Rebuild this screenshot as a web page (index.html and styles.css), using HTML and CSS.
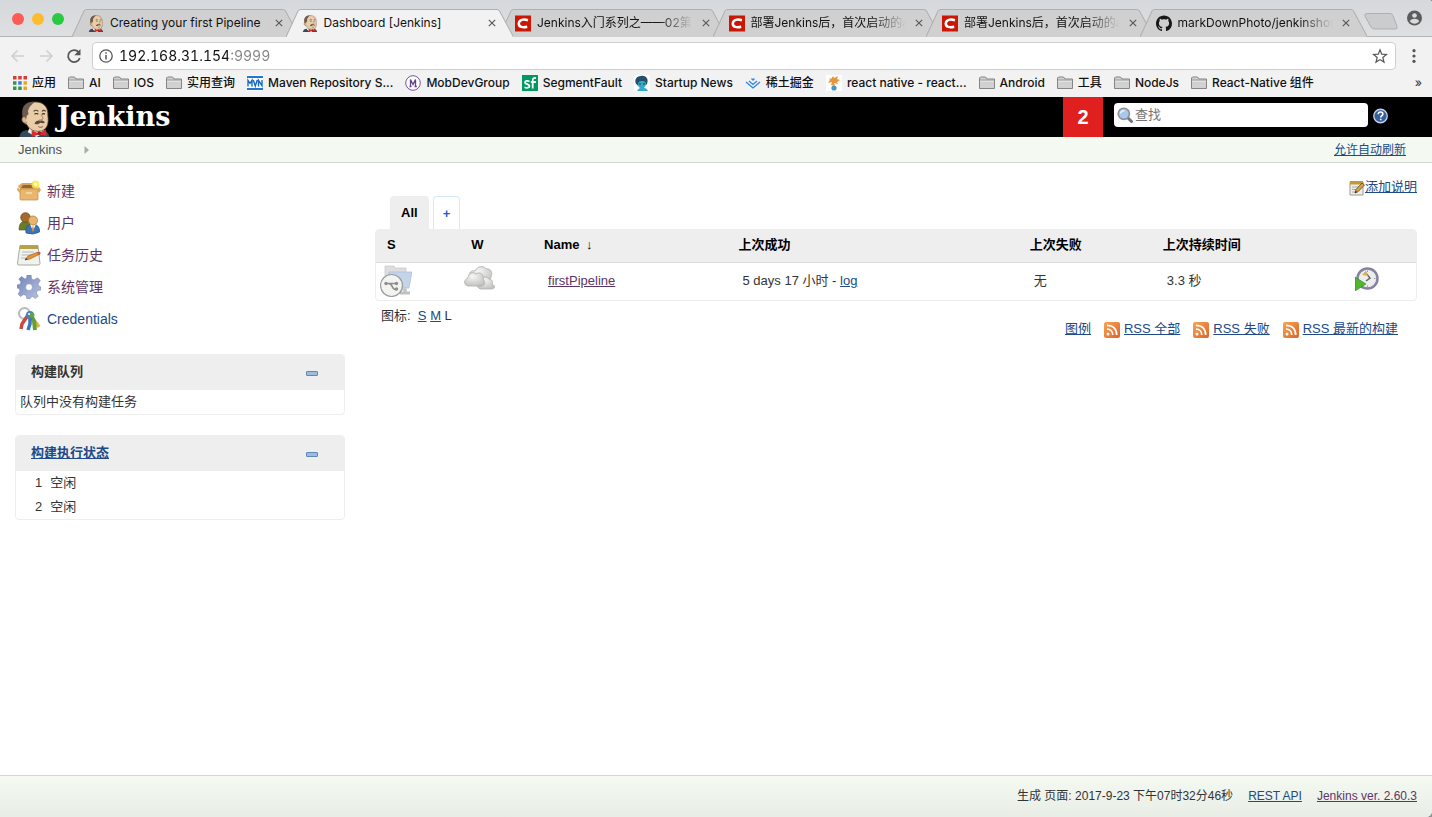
FILE: index.html
```html
<!DOCTYPE html>
<html lang="zh-CN">
<head>
<meta charset="utf-8">
<title>Dashboard [Jenkins]</title>
<link rel="stylesheet" href="styles.css">
</head>
<body>
<svg class="defs" aria-hidden="true">
  <defs>
    <linearGradient id="orange" x1="0" y1="0" x2="1" y2="1"><stop offset="0" stop-color="#f6a457"/><stop offset="1" stop-color="#de6425"/></linearGradient>
    <radialGradient id="cloudFill" cx=".4" cy=".3" r=".8"><stop offset="0" stop-color="#f6f6f5"/><stop offset="1" stop-color="#bdbdbb"/></radialGradient>
    <linearGradient id="gearFill" x1="0" y1="0" x2="1" y2="1"><stop offset="0" stop-color="#6f83b8"/><stop offset="1" stop-color="#b9c4e2"/></linearGradient>
    <symbol id="butler" viewBox="0 0 34 38">
      <path d="M1 38c1-5 4-7 9-7l16 0c4 1 6 3 7 7z" fill="#33495c"/>
      <path d="M12 27l-2 6 9 5 9-5-3-5z" fill="#f3eee6"/>
      <path d="M6 14C5 6 11 1 18 1c8 0 13 5 13 12 0 4 1 7 0 11-1 5-5 8-10 8-6 0-10-3-12-7-3-1-4-3-4-6 0-2 0-4 1-5z" fill="#e9cda9" stroke="#5b493c" stroke-width=".8"/>
      <path d="M17 1C9 0 4 5 4 12c0 3 0 6 2 9l2-1 1-5c2 0 2-2 1-4 1-4 3-6 5-8z" fill="#6b5a4d"/>
      <path d="M7 17c-2-1-4 1-3 4 1 2 3 3 5 2" fill="#dfb58d" stroke="#765840" stroke-width=".8"/>
      <path d="M16 11c2-2 4-1 5 0M25 11c1-2 3-1 4 0" fill="none" stroke="#534237" stroke-width="1.2"/>
      <path d="M17 14c1-1 3-1 4 0M25 14c1-1 2-1 3 0" fill="none" stroke="#332c28" stroke-width="1.2"/>
      <path d="M24 14c1 3 3 4 1 6h-3" fill="none" stroke="#a67650" stroke-width="1"/>
      <path d="M17 24c1-3 4-4 6-3 2-1 4 0 5 2-2 1-4 0-5 0-2 2-4 2-6 1z" fill="#574b43"/>
      <path d="M21 27c2 1 3 1 5 0" fill="none" stroke="#8b4f3d"/>
      <path d="M14 31l7 3 8-4 1 7-8-2-8 3z" fill="#d82c2c"/><circle cx="22" cy="34" r="2" fill="#9d171d"/>
    </symbol>
    <symbol id="folder" viewBox="0 0 16 13"><path d="M.5 12V1.5l1-1h5l1.500 2h7.500V12z" fill="#d1d1d1" stroke="#858585"/><path d="M1 4h14v1H1z" fill="#f3f3f3"/><path d="M1 3.500h14" stroke="#999"/></symbol>
    <symbol id="csdn" viewBox="0 0 16 16"><path fill="#ca1705" d="M0 0h16v16H0z"/><path d="M13 4.800c-4.500-1.400-9-.7-9.200 3.200-.2 3.600 4 4.300 8.400 3.200" fill="none" stroke="#fff" stroke-width="2.500"/></symbol>
    <symbol id="cross" viewBox="0 0 8 8"><path d="M.8.8l6.400 6.400M7.200.8L.8 7.200" stroke="#5a5a5a" stroke-width="1.200"/></symbol>
    <symbol id="rss" viewBox="0 0 16 16"><rect width="16" height="16" rx="2" fill="url(#orange)"/><circle cx="4" cy="12" r="1.500" fill="#fff"/><path d="M3 7.200c3.500 0 5.800 2.300 5.800 5.800M3 3.300c6 0 9.700 3.700 9.700 9.700" fill="none" stroke="#fff" stroke-width="1.700"/></symbol>
    <symbol id="tabshape" viewBox="0 0 228 28" preserveAspectRatio="none"><path d="M0 28L12 2Q13 .5 15 .5H211Q213 .5 214 2L228 28z" fill="currentColor"/><path d="M0 28L12 2Q13 .5 15 .5H211Q213 .5 214 2L228 28" fill="none" stroke="#aeafb0" vector-effect="non-scaling-stroke"/></symbol>
  </defs>
</svg>

<div class="browser">
  <div class="tabstrip">
    <div class="lights"><button class="light red" aria-label="Close"></button><button class="light yellow" aria-label="Minimize"></button><button class="light green" aria-label="Zoom"></button></div>
    <div class="tabs">
      <div class="tab"><svg class="shape"><use href="#tabshape"/></svg><svg class="fav"><use href="#butler"/></svg><span class="title">Creating your first Pipeline</span><button class="close" aria-label="Close tab"><svg><use href="#cross"/></svg></button></div>
      <div class="tab active"><svg class="shape"><use href="#tabshape"/></svg><svg class="fav"><use href="#butler"/></svg><span class="title">Dashboard [Jenkins]</span><button class="close" aria-label="Close tab"><svg><use href="#cross"/></svg></button></div>
      <div class="tab"><svg class="shape"><use href="#tabshape"/></svg><svg class="fav"><use href="#csdn"/></svg><span class="title fade">Jenkins入门系列之——02第二</span><button class="close" aria-label="Close tab"><svg><use href="#cross"/></svg></button></div>
      <div class="tab"><svg class="shape"><use href="#tabshape"/></svg><svg class="fav"><use href="#csdn"/></svg><span class="title fade">部署Jenkins后，首次启动的ad</span><button class="close" aria-label="Close tab"><svg><use href="#cross"/></svg></button></div>
      <div class="tab"><svg class="shape"><use href="#tabshape"/></svg><svg class="fav"><use href="#csdn"/></svg><span class="title fade">部署Jenkins后，首次启动的ad</span><button class="close" aria-label="Close tab"><svg><use href="#cross"/></svg></button></div>
      <div class="tab"><svg class="shape"><use href="#tabshape"/></svg><svg class="fav" viewBox="0 0 16 16"><path fill="#191717" d="M8 0C3.58 0 0 3.58 0 8c0 3.54 2.29 6.53 5.47 7.59.4.07.55-.17.55-.38 0-.19-.01-.82-.01-1.49-2.01.37-2.53-.49-2.69-.94-.09-.23-.48-.94-.82-1.13-.28-.15-.68-.52-.01-.53.63-.01 1.08.58 1.23.82.72 1.21 1.87.87 2.33.66.07-.52.28-.87.51-1.07-1.78-.2-3.64-.89-3.64-3.95 0-.87.31-1.59.82-2.15-.08-.2-.36-1.02.08-2.12 0 0 .67-.21 2.2.82.64-.18 1.32-.27 2-.27s1.36.09 2 .27c1.53-1.04 2.2-.82 2.2-.82.44 1.1.16 1.92.08 2.12.51.56.82 1.27.82 2.15 0 3.07-1.87 3.75-3.65 3.95.29.25.54.73.54 1.48 0 1.07-.01 1.93-.01 2.2 0 .21.15.46.55.38A8 8 0 0 0 16 8c0-4.42-3.58-8-8-8z"/></svg><span class="title fade">markDownPhoto/jenkinshom</span><button class="close" aria-label="Close tab"><svg><use href="#cross"/></svg></button></div>
    </div>
    <button class="newtab" aria-label="New tab"><svg viewBox="0 0 34 17"><path d="M3 .5h23q2 0 3 2l4 11q1 2.500-2 2.500H10q-2 0-3-2L1 3Q0 .5 3 .5z" fill="#cbcccd" stroke="#aeafb0"/></svg></button>
    <button class="avatar" aria-label="Profile"><svg viewBox="0 0 16 16"><circle cx="8" cy="8" r="8" fill="#5a5c5e"/><circle cx="8" cy="5.300" r="2.500" fill="#d8dadb"/><path d="M3 11.500c1-2 3-2.700 5-2.700s4 .7 5 2.700c-1.200 1.800-3 2.600-5 2.600s-3.800-.8-5-2.600z" fill="#d8dadb"/></svg></button>
  </div>
  <div class="toolbar">
    <button aria-label="Back"><svg viewBox="0 0 16 16"><path d="M14 8H2M7.500 2.500L2 8l5.500 5.500" fill="none" stroke="#cfcfcf" stroke-width="1.500"/></svg></button>
    <button aria-label="Forward"><svg viewBox="0 0 16 16"><path d="M2 8h12M8.500 2.500L14 8l-5.500 5.500" fill="none" stroke="#cfcfcf" stroke-width="1.500"/></svg></button>
    <button aria-label="Reload"><svg viewBox="0 0 16 16"><path d="M12.700 4.200A6 6 0 1 0 13.800 10" fill="none" stroke="#565656" stroke-width="1.800"/><path d="M14.500 1v6.200H8.300z" fill="#565656"/></svg></button>
    <label class="omnibox">
      <svg viewBox="0 0 14 14"><circle cx="7" cy="7" r="6.200" fill="none" stroke="#555" stroke-width="1.300"/><path d="M7 6v4.500M7 3.300v1.500" stroke="#555" stroke-width="1.500"/></svg>
      <input class="url" type="text" aria-label="Address" value="192.168.31.154:9999">
      <svg class="star" viewBox="0 0 16 16"><path d="M8 1.800l1.700 4.400 4.800.3-3.700 3 1.200 4.600L8 11.600l-4 2.500 1.200-4.600-3.700-3 4.800-.3z" fill="none" stroke="#555" stroke-width="1.200"/></svg>
    </label>
    <button aria-label="Menu"><svg viewBox="0 0 16 16"><circle cx="8" cy="2.700" r="1.600" fill="#555"/><circle cx="8" cy="8" r="1.600" fill="#555"/><circle cx="8" cy="13.300" r="1.600" fill="#555"/></svg></button>
  </div>
  <nav class="bookmarks">
    <a href="#"><svg viewBox="0 0 14 14" class="apps"><path fill="#d93c35" d="M0 0h3.500v3.500H0zM5.200 0h3.500v3.500H5.200zM10.500 0H14v3.500h-3.500z"/><path fill="#2f9850" d="M0 5.200h3.500v3.500H0zM0 10.500h3.500V14H0z"/><path fill="#3b7ede" d="M5.200 5.200h3.500v3.500H5.200z"/><path fill="#e8a62c" d="M10.500 5.200H14v3.500h-3.500zM10.500 10.500H14V14h-3.500z"/><path fill="#2f9850" d="M5.200 10.500h3.500V14H5.200z"/></svg>应用</a>
    <a href="#"><svg><use href="#folder"/></svg>AI</a>
    <a href="#"><svg><use href="#folder"/></svg>IOS</a>
    <a href="#"><svg><use href="#folder"/></svg>实用查询</a>
    <a href="#"><svg viewBox="0 0 16 16"><path fill="#fff" d="M0 0h16v16H0z"/><path fill="#2377d1" d="M0 1h16v2H0zM0 13h16v2H0z"/><path d="M1 11.500V5.300l2 3 2-3v6.200M6.300 5l2 6 2-6M11.500 11.500V5.300l3.500 5.400V5" fill="none" stroke="#1769c2" stroke-width="1.400"/></svg>Maven Repository S...</a>
    <a href="#"><svg viewBox="0 0 16 16"><circle cx="8" cy="8" r="7.300" fill="#fff" stroke="#72579b"/><path d="M4.500 11.500h2M5.500 11V4.500L8 9.500l2.500-5V11.500M9.500 11.500h2.300" fill="none" stroke="#60458b" stroke-width="1.300"/></svg>MobDevGroup</a>
    <a href="#"><svg viewBox="0 0 16 16"><path fill="#009a61" d="M0 0h16v16H0z"/><path d="M7.500 6.500C5 5.200 3 6 3 7.500c0 2 4.500 1.200 4.500 3.500 0 2-3 2.200-5 1.200M10.700 13.500V5.200c0-2 1.500-2.500 3.300-2M8.800 7H14" fill="none" stroke="#fff" stroke-width="1.800"/></svg>SegmentFault</a>
    <a href="#"><svg viewBox="0 0 16 16"><path d="M0 0h16v16H0z" fill="#fff"/><path d="M3 16c1-2 2-2 3-3L3 10V5l4-2 5 2v5l-2 3c2 0 3 1 4 3z" fill="#35a9c9"/><path d="M2 9C0 4 3 1 7 1c5-1 8 3 6 8l-1 1c0-3-1-4-3-4-3 0-5 0-5 4z" fill="#244f68"/><path d="M5 9h2M9 9h2" stroke="#174255" stroke-width="1.200"/></svg>Startup News</a>
    <a href="#"><svg viewBox="0 0 16 16"><path d="M1 7l7 6 7-6M4 6l4 3.500L12 6M6.500 3.500L8 5l1.500-1.500" fill="none" stroke="#2d83e8" stroke-width="1.300"/></svg>稀土掘金</a>
    <a href="#"><svg viewBox="0 0 16 16"><path d="M0 0h16v16H0z" fill="#fff"/><path d="M3 3l2 1 2-3 1 2 4-2-1 3 3 1-3 2 1 2-4-1 1 3-4-1 1-3-4 1 2-3z" fill="#e8963e"/><circle cx="8" cy="13" r="2.600" fill="#4796c7"/></svg>react native - react...</a>
    <a href="#"><svg><use href="#folder"/></svg>Android</a>
    <a href="#"><svg><use href="#folder"/></svg>工具</a>
    <a href="#"><svg><use href="#folder"/></svg>NodeJs</a>
    <a href="#"><svg><use href="#folder"/></svg>React-Native 组件</a>
    <button class="more" aria-label="More bookmarks">»</button>
  </nav>
</div>

<header class="topbar">
  <a class="logo" href="#"><svg><use href="#butler"/></svg><span>Jenkins</span></a>
  <button class="alerts">2</button>
  <label class="search">
    <svg viewBox="0 0 16 16"><path d="M11 11l3.500 3.500" stroke="#70767c" stroke-width="3" stroke-linecap="round"/><circle cx="6.800" cy="6.800" r="5.600" fill="#a9c9ea" stroke="#8a9198" stroke-width="1.600"/><path d="M3.500 6.500c.3-2 2-3 4-2.800" fill="none" stroke="#e8f3fd" stroke-width="1.500"/></svg>
    <input type="text" placeholder="查找" aria-label="查找">
  </label>
  <a class="help" href="#" aria-label="Help"><svg viewBox="0 0 16 16"><circle cx="8" cy="8" r="7.200" fill="#35609f" stroke="#c6d3e6" stroke-width="1.400"/><path d="M5.600 6.200C5.700 4.500 6.800 3.800 8 3.800c1.500 0 2.500.8 2.500 2.200C10.500 7.500 8.200 7.700 8.200 9.500M8.200 10.800v1.800" fill="none" stroke="#fff" stroke-width="1.700"/></svg></a>
</header>

<nav class="breadcrumb">
  <a href="#">Jenkins</a>
  <svg viewBox="0 0 5 8"><path d="M.5 0L5 4 .5 8z" fill="#a9aca8"/></svg>
  <a class="refresh" href="#">允许自动刷新</a>
</nav>

<div class="page">
  <aside>
    <nav class="tasks">
      <a href="#"><svg viewBox="0 0 24 24"><path d="M1 7l4-3h13l4 4-3 3H4z" fill="#dba65c"/><path d="M6 6h11l2 3H4z" fill="#8e6638"/><path d="M3 10h18v10q0 1-1 1H4q-1 0-1-1z" fill="#e8b66f" stroke="#c08a45" stroke-width=".7"/><path d="M1 8l2 3v3L0 11zM22 8l-2 3 2 3 2-3z" fill="#dca75d"/><path d="M9 13h6v2H9z" fill="#f4d59d"/><circle cx="18.500" cy="5.500" r="4" fill="#f9e94f" opacity=".85"/><circle cx="18.500" cy="5.500" r="2" fill="#fffbb0"/></svg>新建</a>
      <a href="#"><svg viewBox="0 0 24 24"><path d="M2 19c0-6 2-9 7-9 4 0 6 3 6 9z" fill="#6b7d24" stroke="#4f5e18" stroke-width=".6"/><circle cx="8.500" cy="6.500" r="4.800" fill="#a26b2b" stroke="#69431b" stroke-width=".7"/><path d="M9 22c-1-6 2-9 6-9s8 2 7.500 8q-6 3.500-13.500 1z" fill="#3a73ba" stroke="#23508a" stroke-width=".7"/><path d="M13 13l3 7 3-7z" fill="#fff"/><path d="M16 14l1.200 5-1.200 2-1.200-2z" fill="#dc8a24"/><circle cx="16" cy="9.500" r="4.500" fill="#e7b56d" stroke="#a8722f" stroke-width=".7"/></svg>用户</a>
      <a href="#"><svg viewBox="0 0 24 24"><path d="M3 2.500h18l2 18q0 1.500-2 1.500H2q-2 0-1.500-2z" fill="#f2f2ed" stroke="#aaaaa4"/><path d="M3 2h18v4H2.500z" fill="#b5a249"/><path d="M5 9h12M4.500 12h11M4 15h8" stroke="#b6babd"/><path d="M8 17l3-4 10-4 2 2-10 5z" fill="#e79534" stroke="#8d5525" stroke-width=".6"/><path d="M20 9.500l2-.8q2 0 1.500 2L22 12z" fill="#d5504b"/><path d="M8 17l1-2 1.500 1.500z" fill="#333"/></svg>任务历史</a>
      <a href="#"><svg viewBox="0 0 24 24"><g fill="url(#gearFill)" stroke="#7381ab" stroke-width=".5"><path fill-rule="evenodd" d="M10 0h4l.7 4 2.300 1 3.500-2.300 2.800 2.800L21 9l1 2.300 2 .7v3l-3.500.5-1.200 2.500 2 3.200-2.800 2.300-3-2-2 1L13 24h-3l-.8-3.500-2.500-1L3.500 21.500 1 19l2-3-1-2.500L0 13v-3l3-.7L4 7 1.800 4 4.500 1.500 8 4l1.500-.8zM12 8.800a3.400 3.400 0 1 0 0 6.800 3.400 3.400 0 0 0 0-6.800z"/></g></svg>系统管理</a>
      <a class="fresh" href="#"><svg viewBox="0 0 24 24"><circle cx="7.500" cy="6.500" r="5.500" fill="none" stroke="#b7b9ba" stroke-width="2"/><path d="M11 8l-6 9-1 5" stroke="#c94b3e" stroke-width="3.500"/><path d="M13 9l7 8 2 3" stroke="#e5b139" stroke-width="3.500"/><path d="M13 7l4 7 1 9" stroke="#62a03a" stroke-width="4"/><path d="M13 9v8l-2 6" stroke="#3c76ba" stroke-width="3.500"/><circle cx="13" cy="8" r="4" fill="#4682bf"/><circle cx="15" cy="8" r="2.500" fill="#69a344"/><circle cx="12" cy="7" r="1" fill="#fff"/></svg>Credentials</a>
    </nav>
    <section class="pane">
      <h2>构建队列<button aria-label="收起"></button></h2>
      <p>队列中没有构建任务</p>
    </section>
    <section class="pane">
      <h2><a href="#">构建执行状态</a><button aria-label="收起"></button></h2>
      <ol><li><span>1</span>空闲</li><li><span>2</span>空闲</li></ol>
    </section>
  </aside>
  <main>
    <a class="describe" href="#"><svg viewBox="0 0 16 16"><path d="M1 2h13v13H1z" fill="#efefe9" stroke="#9b9b92"/><path d="M1 1h13v3.500H1z" fill="#c09a3a"/><path d="M3 7h7M3 9.500h5M3 12h4" stroke="#aaa"/><path d="M6 13l1-3.500L13 3l2.500 2-6.500 6.700z" fill="#dba348" stroke="#5b4021" stroke-width=".8"/><path d="M6 13l.7-2 1.300 1z" fill="#222"/></svg><span>添加说明</span></a>
    <div class="views"><a class="current" href="#">All</a><a class="add" href="#" aria-label="新建视图">+</a></div>
    <div class="tablebox">
      <table>
        <colgroup><col class="c-s"><col class="c-w"><col class="c-name"><col class="c-ok"><col class="c-fail"><col class="c-time"><col></colgroup>
        <thead><tr><th>S</th><th>W</th><th>Name <span class="arrow">↓</span></th><th>上次成功</th><th>上次失败</th><th>上次持续时间</th><th></th></tr></thead>
        <tbody><tr>
          <td class="ic"><svg class="big" viewBox="0 0 32 32"><path d="M5 1h9l1 2h11v22H5z" fill="#dcdddd" stroke="#c5c6c6" stroke-width=".7"/><path d="M9 7h23l-3 16H8z" fill="#c4d5e9" stroke="#a9bdd6" stroke-width=".7"/><path d="M20 28h10M25 24v4" stroke="#bfc1c1" stroke-width="3"/><circle cx="11.500" cy="20.500" r="11" fill="#f3f3f2" stroke="#9b9c9c" stroke-width="1.200"/><path d="M5 18.500h12M8.500 18.500q2.500 0 4 3.500t4.500 2" fill="none" stroke="#8d8d8b" stroke-width="1.700"/><circle cx="6" cy="18.500" r="1.700" fill="#8d8d8b"/><circle cx="16.500" cy="18.500" r="1.700" fill="#8d8d8b"/><circle cx="16.500" cy="24" r="1.700" fill="#8d8d8b"/></svg></td>
          <td class="ic"><svg class="big" viewBox="0 0 32 32"><g fill="url(#cloudFill)" stroke="#b0b0ae" stroke-width=".8"><path d="M6 12c-2-5 2-7 5-6 2-5 9-6 11-2 5-1 7 4 5 8l-3 6H9z"/><path d="M15 23c-3-1-2-5 1-6 0-5 6-7 9-3 3 0 4 3 3 5 4 2 3 5-1 5H16z"/><path d="M4 21c-5-1-4-7 0-8 0-5 5-7 8-4 4-3 8 1 7 5 3 3 2 7-2 7H4z"/></g></svg></td>
          <td><a class="seen" href="#">firstPipeline</a></td>
          <td>5 days 17 小时 - <a href="#">log</a></td>
          <td>无</td>
          <td>3.3 秒</td>
          <td class="run"><button aria-label="立即构建"><svg viewBox="0 0 24 24"><circle cx="12.500" cy="11.500" r="10" fill="#eceeed" stroke="#85839f" stroke-width="2.500"/><path d="M12.500 3.500v1.500M12.500 18.500v1.500M19 11.500h1.500" stroke="#999" stroke-width="1"/><path d="M10 5l5 6-4 3" fill="none" stroke="#666" stroke-width="1.500"/><path d="M7 8l4-4 2 5z" fill="#d9b253"/><path d="M0 10l11 7-11 7z" fill="#51b52d" stroke="#2f8716" stroke-width=".6"/></svg></button></td>
        </tr></tbody>
      </table>
    </div>
    <div class="below">
      <div class="sizes">图标: &nbsp;<a href="#">S</a> <a href="#">M</a> L</div>
      <div class="feeds"><a href="#">图例</a><a class="feed" href="#"><svg><use href="#rss"/></svg><span>RSS 全部</span></a><a class="feed" href="#"><svg><use href="#rss"/></svg><span>RSS 失败</span></a><a class="feed" href="#"><svg><use href="#rss"/></svg><span>RSS 最新的构建</span></a></div>
    </div>
  </main>
</div>

<footer><span>生成 页面: 2017-9-23 下午07时32分46秒</span><a href="#">REST API</a><a class="seen" href="#">Jenkins ver. 2.60.3</a></footer>
</body>
</html>
```

FILE: styles.css
```css
* { box-sizing: border-box; }
html { background: #8f9396; }
body {
  margin: 0;
  min-height: 100vh;
  display: flex;
  flex-direction: column;
  background: #fff;
  border-radius: 0 4px 6px 0;
  overflow: hidden;
  color: #333;
  font: 13px/16px "Liberation Sans", "Noto Sans CJK SC", sans-serif;
}
button { border: 0; padding: 0; background: none; font: inherit; }
svg { display: block; flex: none; }
a { color: #204a87; }
a.seen { color: #5c3566; }
.defs { position: absolute; width: 0; height: 0; }

/* Browser chrome */
.browser {
  background: #f2f2f2;
  color: #111;
  font: 12px/16px Inter, "Noto Sans CJK SC", sans-serif;
}
.tabstrip {
  display: flex;
  height: 37px;
  padding-right: 10px;
  background: linear-gradient(#d6d9db, #dddfe1);
  border-bottom: 1px solid #b4b5b6;
}
.lights { display: flex; gap: 8px; padding: 13px 8px 0 12px; }
.light { width: 12px; height: 12px; border-radius: 50%; }
.red { background: #fc5b57; }
.yellow { background: #fdbc2e; }
.green { background: #28ca41; }
.tabs { flex: 1; display: flex; padding-top: 9px; min-width: 0; }
.tab {
  position: relative;
  flex: 1 1 0;
  min-width: 0;
  height: 28px;
  display: flex;
  align-items: center;
  padding: 0 17px 0 16px;
  margin-right: -14px;
  color: #d0d0d0;
}
.tab:last-child { margin-right: 0; }
.tab.active { z-index: 1; color: #f2f2f2; }
.shape { position: absolute; inset: 0; width: 100%; height: 28px; }
.fav { position: relative; width: 16px; height: 17px; }
.title {
  position: relative;
  flex: 1;
  min-width: 0;
  margin: 0 9px 0 6px;
  overflow: hidden;
  white-space: nowrap;
  color: #111;
}
.fade { mask-image: linear-gradient(to right, #000 78%, transparent); }
.close { position: relative; }
.close svg { width: 8px; height: 8px; }
.newtab { padding-top: 7px; margin-left: -3px; }
.newtab svg { width: 34px; height: 17px; }
.avatar { margin-left: 9px; }
.avatar svg { width: 15px; height: 16px; }
.toolbar {
  display: flex;
  align-items: center;
  gap: 12px;
  padding: 5px 10px 0 10px;
}
.toolbar button svg { width: 16px; height: 16px; }
.omnibox {
  flex: 1;
  display: flex;
  align-items: center;
  gap: 6px;
  height: 28px;
  margin: 0 -2px;
  padding: 0 7px 0 6px;
  background: #fff;
  border: 1px solid #cfcfcf;
  border-radius: 4px;
}
.omnibox svg { width: 14px; height: 14px; }
.omnibox .star { width: 16px; height: 16px; }
.url {
  flex: 1;
  min-width: 0;
  padding: 0;
  border: 0;
  font: 14px/20px Inter, sans-serif;
  font-variant-numeric: tabular-nums;
  color: transparent;
  background: linear-gradient(to right, #111 109px, #858585 109px);
  background-clip: text;
}
.bookmarks {
  display: flex;
  align-items: center;
  gap: 12px;
  height: 27px;
  padding: 0 10px 2px 13px;
  font-weight: 500;
  white-space: nowrap;
  overflow: hidden;
}
.bookmarks a {
  display: flex;
  align-items: center;
  gap: 5px;
  color: #111;
  text-decoration: none;
}
.bookmarks svg { width: 16px; height: 16px; }
.bookmarks .apps { width: 14px; height: 14px; }
.more { margin-left: auto; color: #444; }

/* Jenkins header */
.topbar {
  display: flex;
  align-items: center;
  height: 40px;
  padding: 0 44px 0 18px;
  background: #000;
}
.logo {
  display: flex;
  gap: 6px;
  margin-right: auto;
  color: #fff;
  text-decoration: none;
  font: bold 27px/40px "DejaVu Serif", serif;
}
.logo svg { width: 33px; height: 36px; margin-top: 4px; }
.alerts {
  align-self: stretch;
  width: 40px;
  background: #e01f1f;
  color: #fff;
  font: bold 20px/40px "Liberation Sans", sans-serif;
}
.search {
  display: flex;
  align-items: center;
  gap: 2px;
  width: 254px;
  height: 24px;
  margin: 0 5px 4px 11px;
  padding: 0 3px;
  border-radius: 4px;
  background: #fff;
}
.search svg { width: 16px; height: 16px; }
.search input {
  flex: 1;
  min-width: 0;
  border: 0;
  padding: 0;
  background: none;
  font: 13px/20px "Liberation Sans", "Noto Sans CJK SC", sans-serif;
}
.search input::placeholder { color: #757575; }
.help { margin-bottom: 2px; }
.help svg { width: 15px; height: 16px; }
.breadcrumb {
  display: flex;
  align-items: center;
  height: 26px;
  padding: 0 26px 0 18px;
  background: #f4faf1;
  border-bottom: 1px solid #d3d7cf;
}
.breadcrumb a { color: #4d545d; text-decoration: none; }
.breadcrumb svg { width: 5px; height: 8px; margin-left: 22px; }
.breadcrumb .refresh {
  margin-left: auto;
  color: #204a87;
  font-size: 12px;
  text-decoration: underline;
}

/* Page body */
.page {
  flex: 1;
  display: grid;
  grid-template-columns: 360px minmax(0, 1fr);
}
aside { padding: 12px 15px; }
.tasks { display: flex; flex-direction: column; margin-bottom: 19px; }
.tasks a {
  display: flex;
  align-items: center;
  gap: 6px;
  height: 32px;
  padding-left: 2px;
  color: #5c3566;
  font-size: 14px;
  text-decoration: none;
}
.tasks .fresh { color: #204a87; }
.tasks svg { width: 24px; height: 24px; fill: none; }
.pane {
  margin-bottom: 20px;
  border: 1px solid #eee;
  border-radius: 4px;
  overflow: hidden;
}
.pane h2 {
  display: flex;
  align-items: center;
  justify-content: space-between;
  height: 35px;
  margin: 0;
  padding: 0 26px 2px 15px;
  background: #eee;
  font-size: 13px;
  line-height: 16px;
}
.pane button {
  width: 12px;
  height: 5px;
  margin-top: 3px;
  border: 1px solid #5f89b9;
  border-radius: 1px;
  background: #9dbbdc;
}
.pane p { margin: 0; padding: 0 4px; line-height: 24px; }
.pane ol { margin: 0; padding: 0; list-style: none; line-height: 24px; }
.pane li { display: flex; gap: 8px; padding-left: 19px; }
main { padding: 16px 15px 0; }
.describe { display: flex; justify-content: flex-end; }
.describe svg { width: 16px; height: 16px; margin-top: 1px; }
.views { display: flex; gap: 4px; padding-left: 15px; }
.views a {
  height: 33px;
  padding: 0 11px;
  border-radius: 4px 4px 0 0;
  font-weight: bold;
  line-height: 33px;
  text-decoration: none;
}
.views .current { background: #eee; color: #000; }
.views .add { padding: 0 9px; border: 1px solid #d6e8fa; border-bottom: 0; color: #1a5fcc; }
.tablebox { border: 1px solid #eee; border-radius: 4px; overflow: hidden; }
table { width: 100%; table-layout: fixed; border-collapse: collapse; }
.c-s { width: 8.1%; }
.c-w { width: 7%; }
.c-name { width: 18.7%; }
.c-ok { width: 28%; }
.c-fail { width: 12.8%; }
.c-time { width: 18.2%; }
th {
  height: 32px;
  padding: 0 11px 2px;
  background: #eee;
  border-bottom: 1px solid #ddd;
  color: #000;
  text-align: left;
}
.arrow { margin-left: 3px; font-weight: normal; }
td { height: 38px; padding: 0 15px; }
td.ic { padding: 0 4px; }
td.run { padding: 0 14px; }
.big { width: 32px; height: 32px; }
.run svg { width: 24px; height: 24px; }
.below { display: flex; justify-content: space-between; }
.sizes { padding: 7px 6px; }
.feeds { display: flex; gap: 13px; padding: 20px 19px 0 0; }
.feed { display: flex; gap: 4px; }
.feed svg { width: 16px; height: 16px; margin-top: 1px; }

footer {
  display: flex;
  justify-content: flex-end;
  gap: 15px;
  padding: 12px 15px 13px;
  border-top: 1px solid #d3d7cf;
  background: linear-gradient(#f4faf1, #e8ede5);
  font-size: 12px;
}
```
